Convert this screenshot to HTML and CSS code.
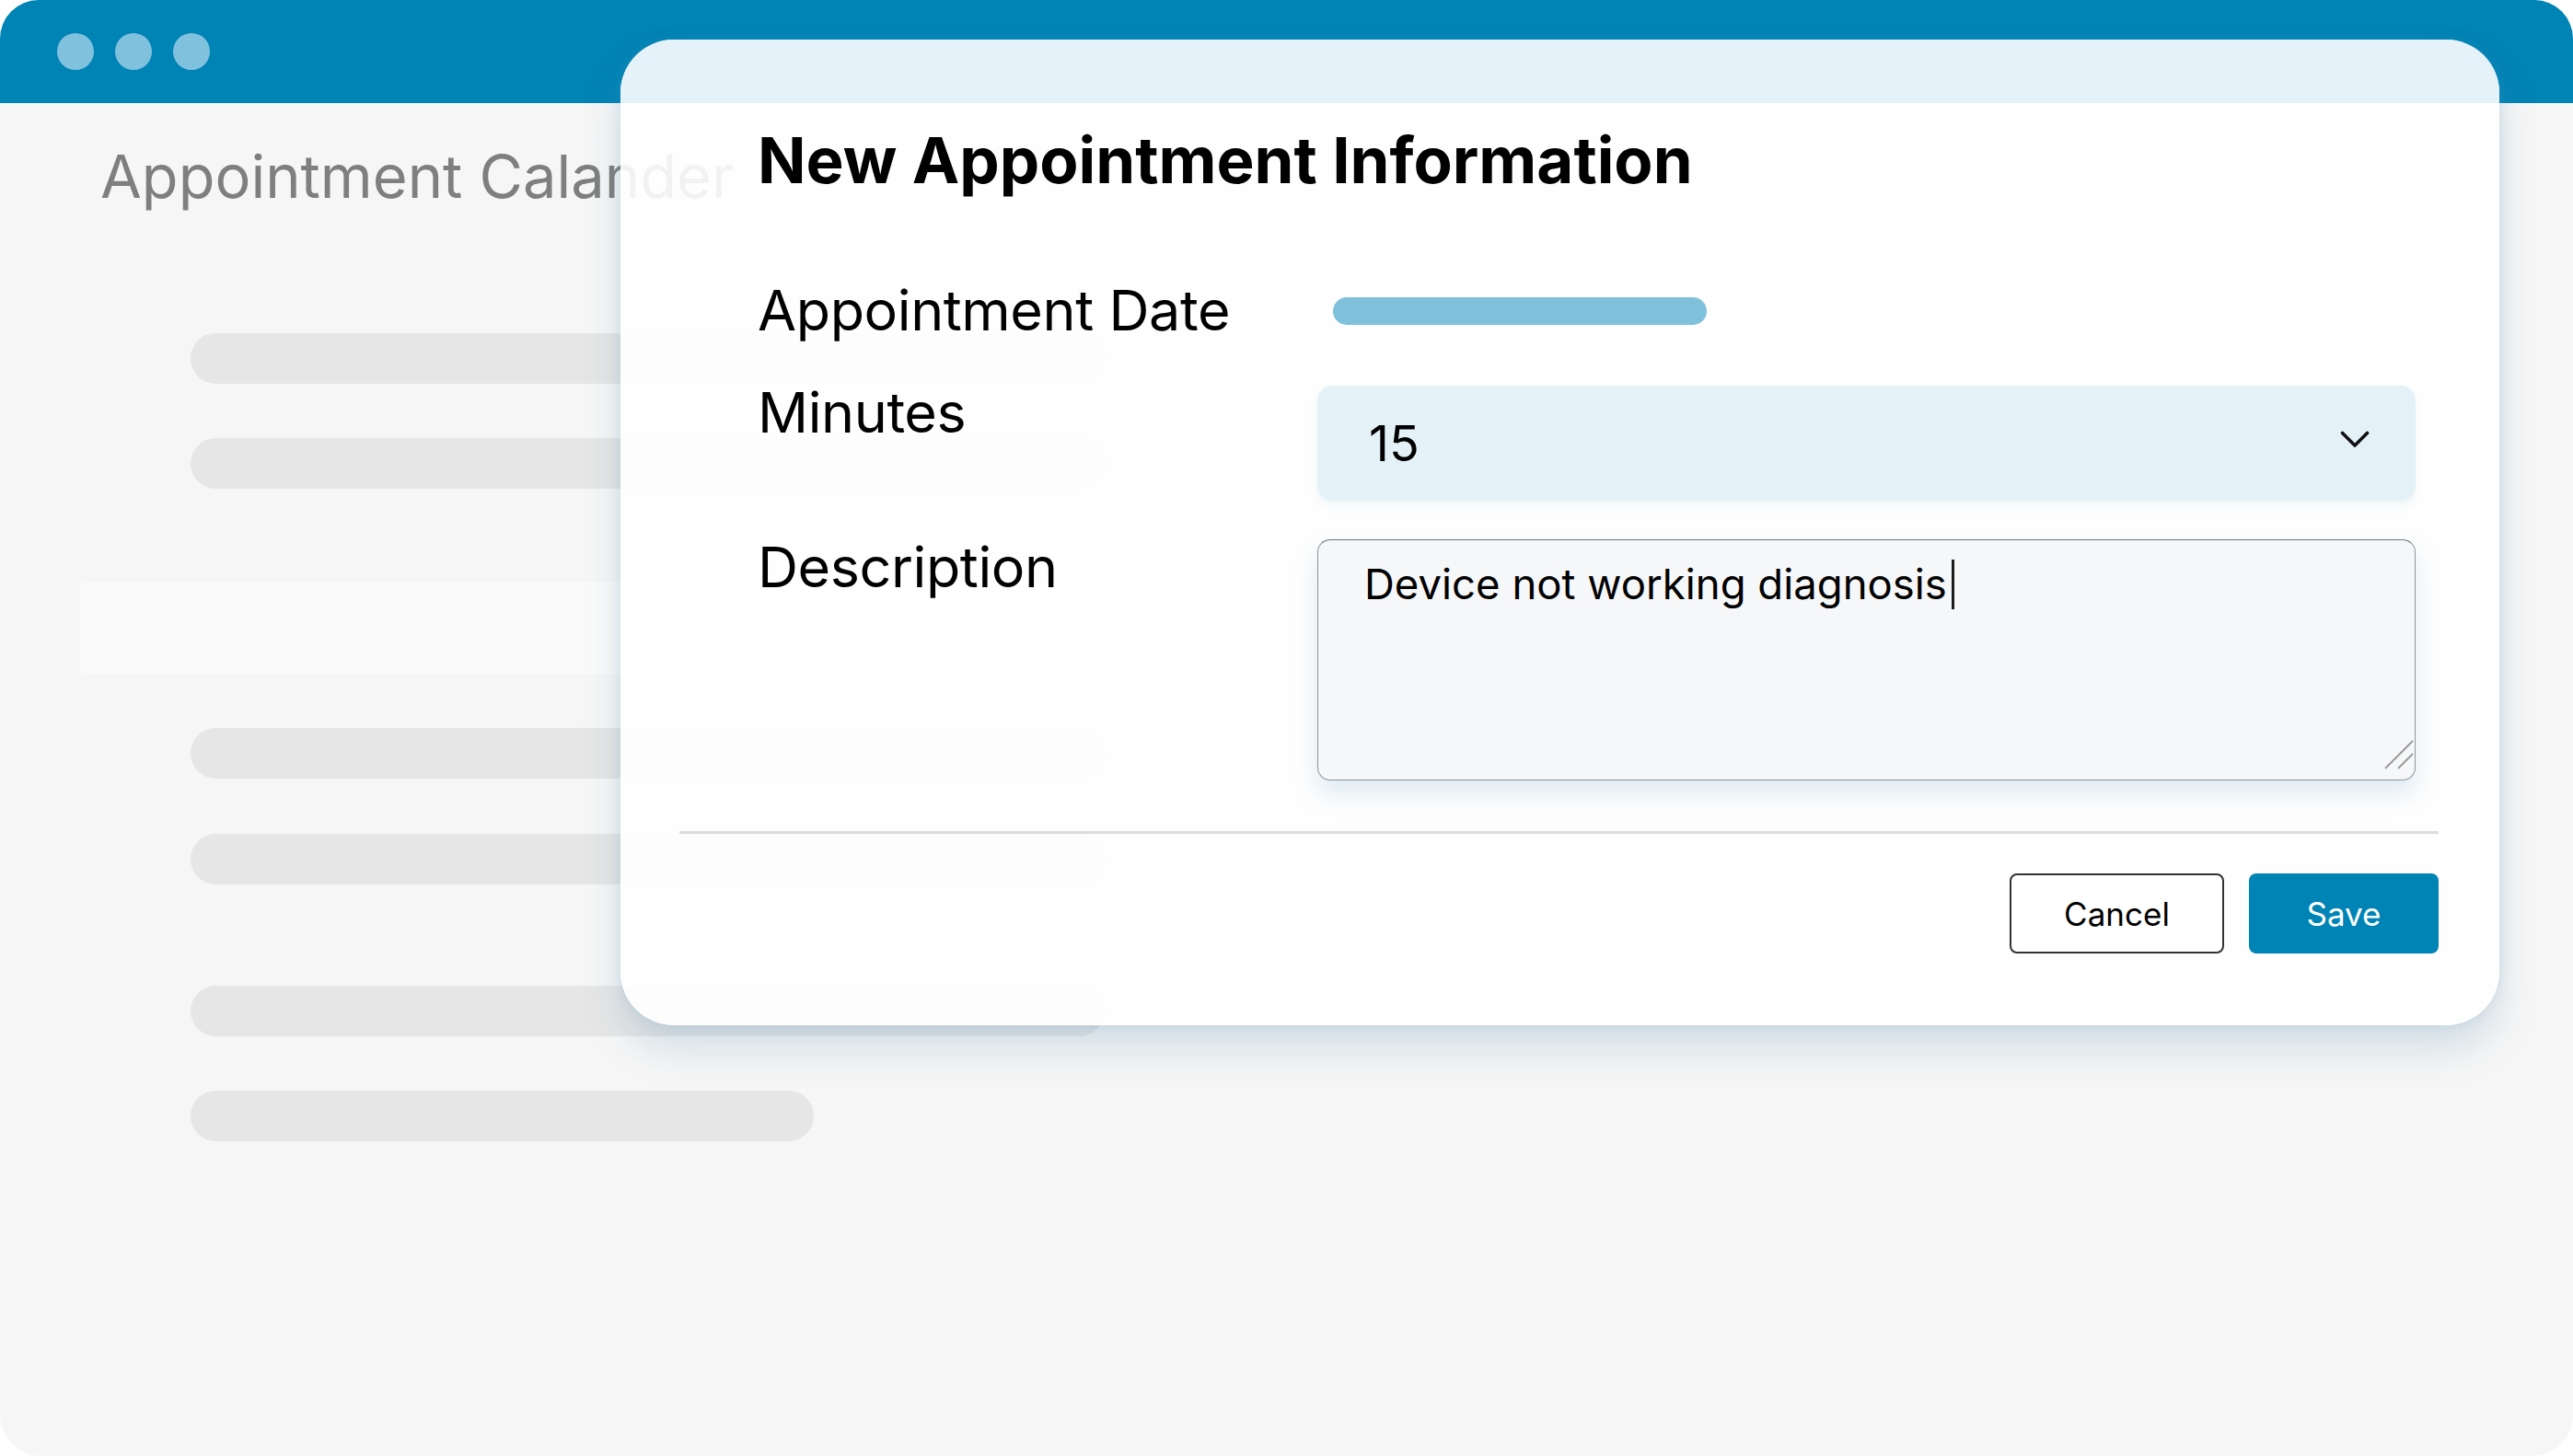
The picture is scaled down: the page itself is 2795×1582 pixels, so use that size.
FILE: index.html
```html
<!DOCTYPE html>
<html lang="en">
<head>
<meta charset="utf-8">
<title>Appointment Calander</title>
<link rel="stylesheet" href="styles.css">
</head>
<body>
<div class="window">
  <header class="titlebar">
    <span class="dot"></span><span class="dot"></span><span class="dot"></span>
  </header>
  <main class="content">
    <h1 class="page-title">Appointment Calander</h1>
    <div class="bar bar-1"></div>
    <div class="bar bar-2"></div>
    <div class="strip"></div>
    <div class="bar bar-3"></div>
    <div class="bar bar-4"></div>
    <div class="bar bar-5"></div>
    <div class="bar bar-6"></div>
  </main>
  <section class="modal">
    <div class="modal-band"></div>
    <div class="modal-body">
      <h2 class="modal-title">New Appointment Information</h2>
      <div class="form">
        <div class="row row-date">
          <div class="label">Appointment Date</div>
          <div class="date-bar"></div>
        </div>
        <div class="row row-minutes">
          <div class="label">Minutes</div>
          <div class="select">
            <span class="select-value">15</span>
            <svg class="chevron" width="32" height="19" viewBox="0 0 32 19"><polyline points="2.5,2.5 16,16 29.5,2.5" fill="none" stroke="#111" stroke-width="3.6" stroke-linecap="round" stroke-linejoin="round"/></svg>
          </div>
        </div>
        <div class="row row-desc">
          <div class="label">Description</div>
          <div class="textarea">
            <span class="textarea-text">Device not working diagnosis</span><span class="caret"></span>
            <svg class="resizer" width="32" height="32" viewBox="0 0 32 32"><line x1="31" y1="1" x2="1" y2="31" stroke="#9a9a9a" stroke-width="2"/><line x1="31" y1="15" x2="15" y2="31" stroke="#9a9a9a" stroke-width="2"/></svg>
          </div>
        </div>
      </div>
      <div class="divider"></div>
      <div class="actions">
        <button class="btn btn-cancel">Cancel</button>
        <button class="btn btn-save">Save</button>
      </div>
    </div>
  </section>
</div>
</body>
</html>
```
FILE: styles.css
```css
html, body {
  margin: 0;
  padding: 0;
  background: #ffffff;
}
body {
  width: 2795px;
  height: 1582px;
  overflow: hidden;
  font-family: Inter, "Noto Sans", "Liberation Sans", sans-serif;
}
.window {
  position: relative;
  width: 2795px;
  height: 1582px;
  background: #f6f6f6;
  border-radius: 42px 42px 45px 45px;
  overflow: hidden;
}
.titlebar {
  height: 112px;
  background: #0083b5;
  display: flex;
  align-items: center;
  gap: 23px;
  padding-left: 62px;
  box-sizing: border-box;
}
.dot {
  width: 40px;
  height: 40px;
  border-radius: 50%;
  background: #80c1de;
}
.content {
  padding: 40px 0 0 109px;
}
.page-title {
  margin: 0;
  font-size: 65px;
  line-height: 80px;
  font-weight: 400;
  color: #7f7f7f;
}
.bar {
  height: 55px;
  border-radius: 28px;
  background: #e6e6e6;
  width: 993px;
  margin-left: 98px;
}
.bar-1 { margin-top: 130px; }
.bar-2 { margin-top: 59px; }
.strip {
  margin-top: 101px;
  margin-left: -22px;
  width: 1113px;
  height: 100px;
  background: #fafafa;
  border-radius: 6px;
}
.bar-3 { margin-top: 59px; }
.bar-4 { margin-top: 60px; }
.bar-5 { margin-top: 110px; }
.bar-6 { margin-top: 59px; width: 677px; }

.modal {
  position: absolute;
  left: 674px;
  top: 43px;
  width: 2041px;
  height: 1071px;
  border-radius: 58px;
  background: rgba(255, 255, 255, 0.9);
  box-shadow: 0 26px 40px rgba(90, 140, 175, 0.22), 0 0 14px rgba(90, 160, 200, 0.18);
  overflow: hidden;
}
.modal-band {
  height: 69px;
  background: #e5f2fa;
}
.modal-body {
  padding: 21px 66px 0 64px;
}
.modal-title {
  margin: 0 0 0 85px;
  font-size: 69px;
  line-height: 83px;
  font-weight: 700;
  color: #000;
}
.form {
  margin-top: 84px;
  padding-left: 85px;
}
.row {
  display: flex;
  align-items: flex-start;
}
.row-date { align-items: center; }
.row-minutes { margin-top: 36px; }
.row-desc { margin-top: 35px; }
.label {
  width: 608px;
  flex: none;
  font-size: 61px;
  line-height: 75px;
  letter-spacing: -0.4px;
  color: #000;
}
.date-bar {
  margin-left: 17px;
  width: 406px;
  height: 30px;
  border-radius: 15px;
  background: #7fc0db;
}
.select {
  margin-top: 8px;
  width: 1193px;
  height: 125px;
  box-sizing: border-box;
  border-radius: 16px;
  background: #e4f2f8;
  box-shadow: 0 6px 10px rgba(150, 190, 210, 0.12);
  display: flex;
  align-items: center;
  justify-content: space-between;
  padding: 0 50px 0 56px;
}
.select-value {
  font-size: 54px;
  color: #000;
}
.chevron {
  margin-top: -8px;
}
.textarea {
  position: relative;
  margin-top: 7px;
  width: 1193px;
  height: 262px;
  box-sizing: border-box;
  border: 1.5px solid #8f949b;
  border-top-color: #6f747b;
  border-radius: 14px;
  background: #f6f7f9;
  box-shadow: 0 14px 26px rgba(110, 165, 200, 0.22);
  padding: 21px 50px 19px;
  font-size: 45.5px;
  line-height: 54px;
  color: #000;
}
.caret {
  display: inline-block;
  width: 3px;
  height: 54px;
  margin-left: 5px;
  background: #1a1a1a;
  vertical-align: top;
}
.resizer {
  position: absolute;
  right: 1px;
  bottom: 11px;
}
.divider {
  margin-top: 55px;
  height: 3px;
  background: #dcdcdc;
}
.actions {
  margin-top: 43px;
  display: flex;
  justify-content: flex-end;
  gap: 27px;
}
.btn {
  height: 87px;
  border-radius: 8px;
  font-family: Inter, "Noto Sans", "Liberation Sans", sans-serif;
  font-size: 35px;
  cursor: pointer;
  padding: 0;
}
.btn-cancel {
  width: 233px;
  background: #ffffff;
  color: #000;
  border: 2px solid #333;
}
.btn-save {
  width: 206px;
  background: #0083b5;
  color: #ffffff;
  border: none;
}
```
